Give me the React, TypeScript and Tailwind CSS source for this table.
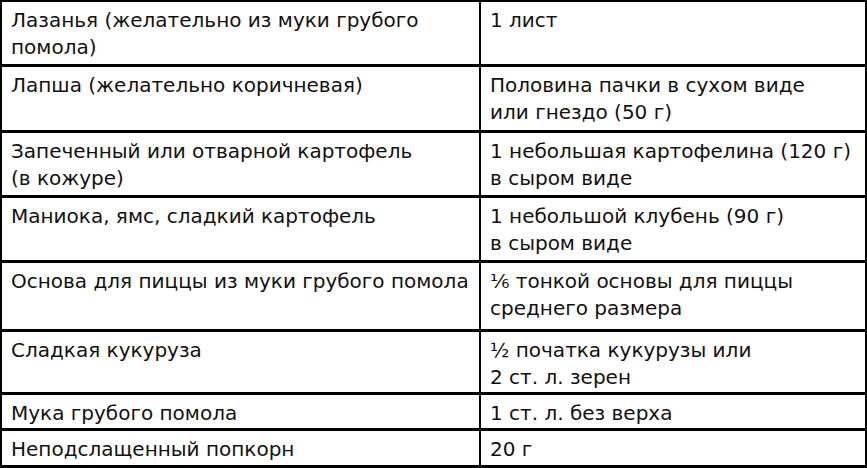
const ROWS: { left: string[]; right: string[]; h: string }[] = [
  { left: ["Лазанья (желательно из муки грубого", "помола)"], right: ["1 лист"], h: "h-[62px]" },
  { left: ["Лапша (желательно коричневая)"], right: ["Половина пачки в сухом виде", "или гнездо (50 г)"], h: "h-[66px]" },
  { left: ["Запеченный или отварной картофель", "(в кожуре)"], right: ["1 небольшая картофелина (120 г)", "в сыром виде"], h: "h-[65px]" },
  { left: ["Маниока, ямс, сладкий картофель"], right: ["1 небольшой клубень (90 г)", "в сыром виде"], h: "h-[65px]" },
  { left: ["Основа для пиццы из муки грубого помола"], right: ["⅙ тонкой основы для пиццы", "среднего размера"], h: "h-[69px]" },
  { left: ["Сладкая кукуруза"], right: ["½ початка кукурузы или", "2 ст. л. зерен"], h: "h-[63px]" },
  { left: ["Мука грубого помола"], right: ["1 ст. л. без верха"], h: "h-[36px]" },
  { left: ["Неподслащенный попкорн"], right: ["20 г"], h: "h-[37px]" },
];

function Cell({ lines, className }: { lines: string[]; className?: string }) {
  return (
    <div className={`flex flex-col pl-[9px] pr-1 pt-[5px] whitespace-nowrap ${className ?? ""}`}>
      {lines.map((l, i) => (
        <div key={i}>{l}</div>
      ))}
    </div>
  );
}

export default function App() {
  return (
    <div
      className="w-[867px] h-[468px] bg-white text-[#111] text-[20px] leading-[27px] overflow-hidden"
      style={{ fontFamily: '"DejaVu Sans", "Liberation Sans", sans-serif' }}
    >
      <div className="border-2 border-b-[3px] border-black">
        {ROWS.map((row, i) => (
          <div
            key={i}
            className={`grid grid-cols-[479px_1fr] ${row.h} ${i > 0 ? "border-t-[3px] border-black" : ""}`}
          >
            <Cell lines={row.left} className="border-r-2 border-black" />
            <Cell lines={row.right} />
          </div>
        ))}
      </div>
    </div>
  );
}
